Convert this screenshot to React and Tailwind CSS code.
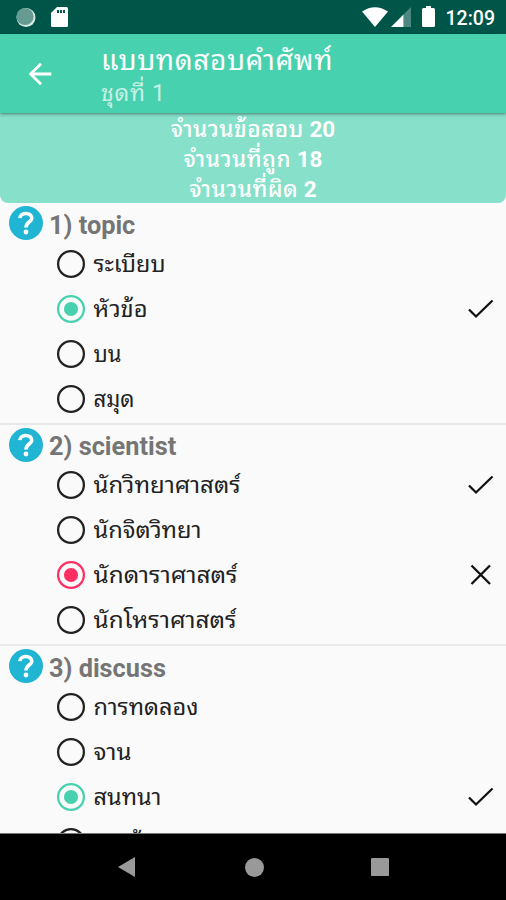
import React from 'react';

const QUESTIONS = [
  {
    id: 1,
    word: 'topic',
    options: [
      { text: 'ระเบียบ', w: 72 },
      { text: 'หัวข้อ', w: 54, picked: 'right', mark: 'check' },
      { text: 'บน', w: 28 },
      { text: 'สมุด', w: 41 },
    ],
  },
  {
    id: 2,
    word: 'scientist',
    options: [
      { text: 'นักวิทยาศาสตร์', w: 147, mark: 'check' },
      { text: 'นักจิตวิทยา', w: 108 },
      { text: 'นักดาราศาสตร์', w: 144, picked: 'wrong', mark: 'cross' },
      { text: 'นักโหราศาสตร์', w: 143 },
    ],
  },
  {
    id: 3,
    word: 'discuss',
    options: [
      { text: 'การทดลอง', w: 105 },
      { text: 'จาน', w: 38 },
      { text: 'สนทนา', w: 68, picked: 'right', mark: 'check' },
      { text: 'การบ้าน', w: 72 },
    ],
  },
];

const SUMMARY = [
  { label: 'จำนวนข้อสอบ', value: 20 },
  { label: 'จำนวนที่ถูก', value: 18 },
  { label: 'จำนวนที่ผิด', value: 2 },
];

const Radio = ({ picked }) => {
  const color = picked === 'right' ? 'text-[#48d1ae]' : picked === 'wrong' ? 'text-[#ff2f63]' : 'text-[#222]';
  return (
    <svg viewBox="0 0 24 24" className={`size-[34px] shrink-0 ${color}`}>
      <circle cx="12" cy="12" r="9.1" fill="none" stroke="currentColor" strokeWidth="1.6" />
      {picked && <circle cx="12" cy="12" r="5" fill="currentColor" />}
    </svg>
  );
};

const HelpIcon = () => (
  <svg viewBox="0 0 34 34" className="size-[34px] shrink-0">
    <circle cx="17" cy="17" r="17" fill="#20b5d3" />
    <path d="M10.8 12.2C11.2 5.8 23 6 22.8 12.2C22.6 16.2 17 16 17 21.4" fill="none" stroke="#fff" strokeWidth="3.6" />
    <circle cx="17" cy="26" r="2.4" fill="#fff" />
  </svg>
);

const Mark = ({ kind }) => (
  <svg viewBox="0 0 34 34" className="ml-auto size-[34px] shrink-0" fill="none" stroke="#111" strokeWidth="2.3">
    {kind === 'check' ? <path d="M5 17.5L12 24.5L28.5 8.5" /> : <path d="M7.5 7.5L26 26M26 7.5L7.5 26" />}
  </svg>
);

const StatusBar = () => (
  <div className="flex h-[34px] shrink-0 items-center bg-[#005549] pl-[15px] pr-[11px] text-white">
    <svg viewBox="0 0 22 22" className="size-[22px]">
      <circle cx="11" cy="11.5" r="9.5" fill="#d9e8e5" />
      <circle cx="10" cy="10.5" r="8.6" fill="#669b92" />
    </svg>
    <svg viewBox="0 0 17 20" className="ml-3.5 h-5 w-[17px]">
      <path d="M6 0h9.5Q17 0 17 1.5v17q0 1.5-1.5 1.5h-14Q0 20 0 18.5V6z" fill="#fff" />
      <path d="M6 3h2v3H6zM9 3h2v3H9zM12 3h2v3h-2z" fill="#005549" />
    </svg>
    <svg viewBox="0 0 26 20" className="ml-auto h-5 w-[26px]">
      <path d="M0 4.5Q13-4 26 4.5L13 20z" fill="#fff" />
    </svg>
    <svg viewBox="0 0 20 20" className="ml-[3px] size-5">
      <path d="M20 0v20H12.5V7.5z" fill="#fff" fillOpacity=".3" />
      <path d="M12.5 7.5V20H0z" fill="#fff" />
    </svg>
    <svg viewBox="0 0 13 21" className="mb-0.5 ml-[11px] h-[21px] w-[13px]">
      <path d="M4 0h5v2h2.5Q13 2 13 3.5v16q0 1.5-1.5 1.5h-10Q0 21 0 19.5v-16Q0 2 1.5 2H4z" fill="#fff" />
    </svg>
    <span className="ml-[11px] mt-[3px] text-[19.5px] font-medium leading-none">12:09</span>
  </div>
);

const Option = ({ option }) => (
  <div className="flex h-[45px] items-center pl-[54px] pr-2">
    <Radio picked={option.picked} />
    <svg height="44" className="ml-[5px] w-[200px] overflow-visible">
      <text x="0.5" y="30" textLength={option.w} lengthAdjust="spacingAndGlyphs" fontSize="22" fill="#222">
        {option.text}
      </text>
    </svg>
    {option.mark && <Mark kind={option.mark} />}
  </div>
);

export default function App() {
  return (
    <div className="flex h-[900px] w-[506px] flex-col overflow-hidden bg-[#fafafa] font-[Roboto,'Noto_Sans_Thai_Looped','Noto_Looped_Thai','Droid_Sans_Thai',Waree,Loma,Garuda,'Noto_Sans_Thai',sans-serif]">
      <StatusBar />

      {/* App bar */}
      <header className="z-10 flex h-[79px] shrink-0 items-center bg-[#48d1ae] pl-[23px] text-white shadow-[0_1px_3px_rgba(0,0,0,0.45)]">
        <svg viewBox="0 0 24 24" className="size-[34px]" fill="#fff">
          <path d="M20 11H7.83l5.59-5.59L12 4l-8 8 8 8 1.41-1.41L7.83 13H20v-2z" />
        </svg>
        <div className="ml-11 pt-[3px]">
          <h1 className="text-[28px] leading-[38px] tracking-[0.6px]">แบบทดสอบคำศัพท์</h1>
          <p className="text-[23px] leading-7 tracking-[0.7px] text-white/70">ชุดที่ 1</p>
        </div>
      </header>

      {/* Score summary */}
      <section className="h-[90px] shrink-0 rounded-b-lg bg-[#87e0c9] pt-px text-center text-[22.5px] leading-[30px] text-white">
        {SUMMARY.map((row) => (
          <p key={row.label}>
            <span className="font-medium tracking-[0.5px]">{row.label}</span> <b>{row.value}</b>
          </p>
        ))}
      </section>

      <main className="min-h-0 flex-1 overflow-hidden">
        {QUESTIONS.map((q) => (
          <div key={q.id} className="h-[221.5px] border-b-2 border-[#e9e9e9]">
            <div className="flex h-[38px] items-center gap-1.5 pl-[9px] pt-0.5">
              <HelpIcon />
              <h2 className="pt-[5px] text-[25.3px] font-bold leading-none text-[#757575]">
                {q.id}) {q.word}
              </h2>
            </div>
            {q.options.map((option) => (
              <Option key={option.text} option={option} />
            ))}
          </div>
        ))}
      </main>

      {/* Navigation bar */}
      <nav className="flex h-[67px] shrink-0 items-center justify-between border-t border-[#777] bg-black px-[117px]">
        <svg viewBox="0 0 20 20" className="size-5" fill="#999">
          <path d="M18 0v20L1 10z" />
        </svg>
        <div className="size-[19px] rounded-full bg-[#999]" />
        <div className="size-[18px] rounded-[1px] bg-[#999]" />
      </nav>
    </div>
  );
}
